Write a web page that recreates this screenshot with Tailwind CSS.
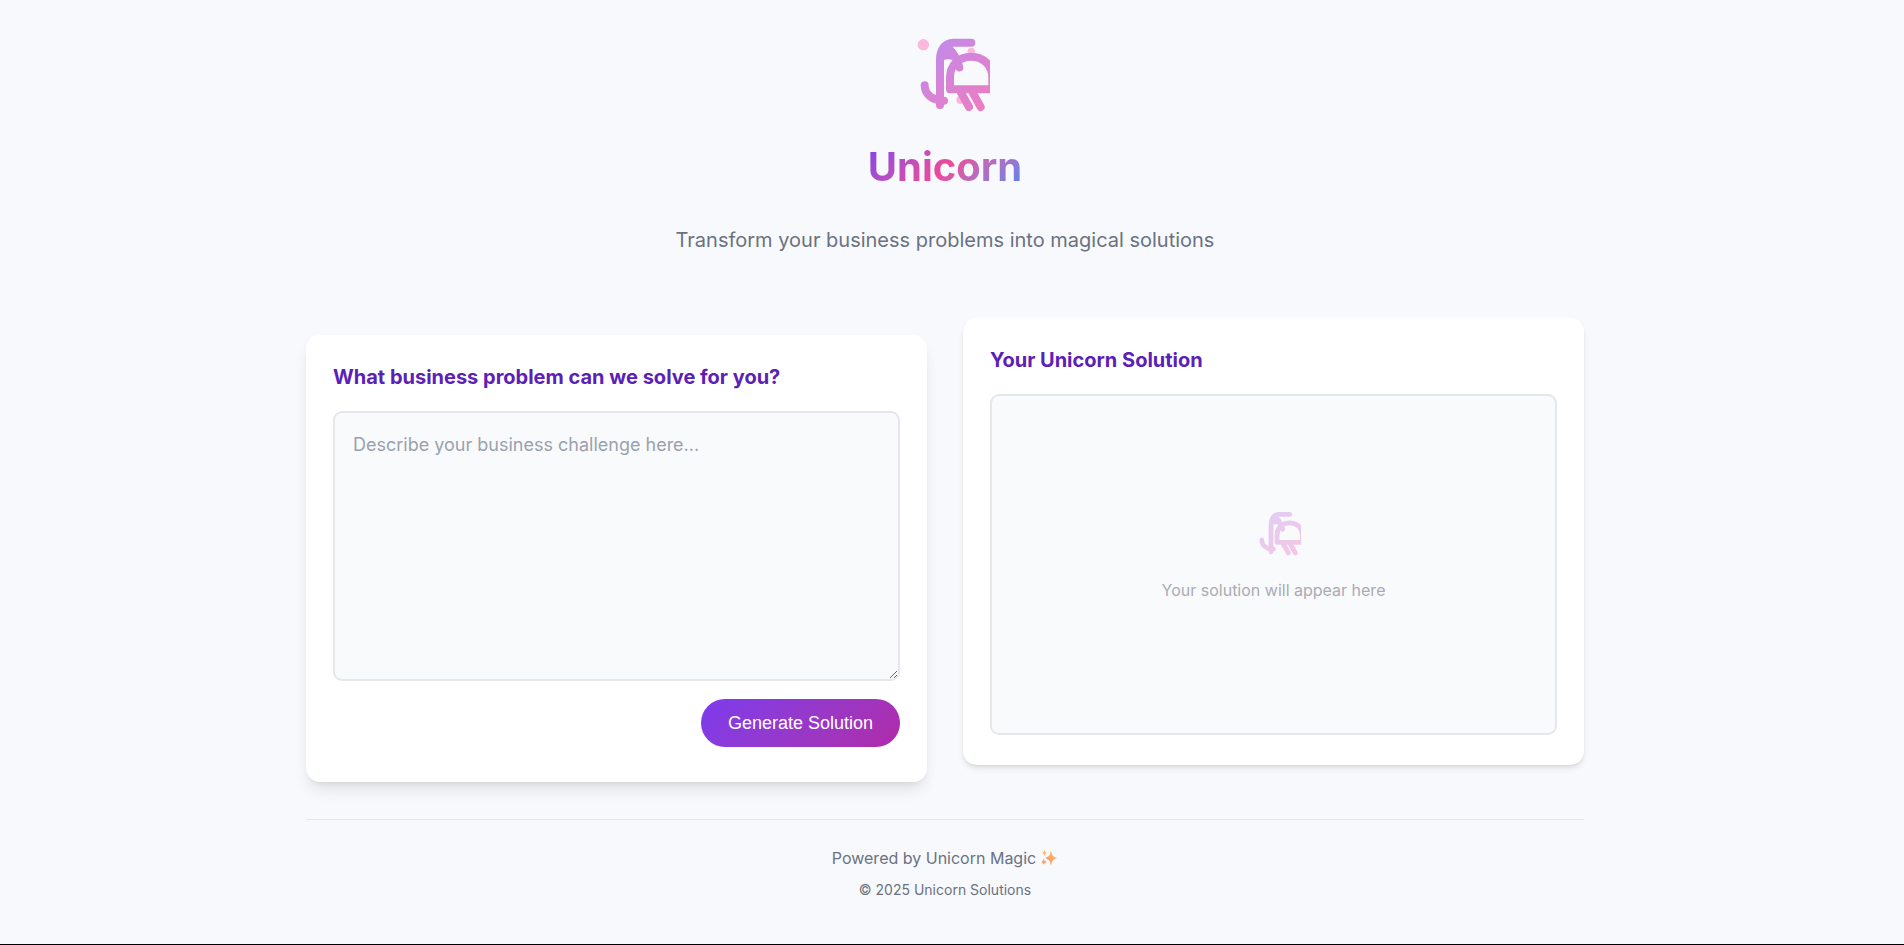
<!DOCTYPE html>
<html lang="en">
<head>
    <meta charset="UTF-8">
    <meta name="viewport" content="width=device-width, initial-scale=1.0">
    <title>Unicorn</title>
    <script src="https://cdn.jsdelivr.net/npm/@tailwindcss/browser@4"></script>
</head>
<body class="min-h-screen flex flex-col bg-[#f8f9fd] border-b border-black pr-[14px] font-['Inter',sans-serif] text-gray-500">
    <div class="w-full max-w-[1278px] mx-auto pt-[27px]">
        <header class="flex flex-col items-center text-center">
            <svg class="size-[90px]" viewBox="0 0 270 270" fill="none" aria-hidden="true">
                <defs>
                    <linearGradient id="mane" gradientUnits="userSpaceOnUse" x1="70" y1="30" x2="270" y2="270">
                        <stop offset="0" stop-color="#bb8cf0"/>
                        <stop offset="1" stop-color="#f47abc"/>
                    </linearGradient>
                </defs>
                <g fill="#f9b8dc">
                    <circle cx="70" cy="53" r="17"/>
                    <circle cx="214" cy="73" r="11"/>
                    <circle cx="181" cy="219" r="12"/>
                </g>
                <g id="unicorn" stroke="url(#mane)" stroke-width="24" stroke-linecap="round" stroke-linejoin="round">
                    <path d="M214 47H160C134 47 120 70 120 99V234"/>
                    <path d="M120 99L125 70L155 52L176 108Q152 92 131 99Z" fill="url(#mane)" stroke="none"/>
                    <path d="M148 66Q170 88 178 121"/>
                    <path d="M74 175C74 200 95 221 132 221"/>
                    <path d="M150 187V152C150 115 175 89 214 89C250 89 277 115 277 152V187Z"/>
                    <path d="M182 195L207 240M217 195L242 240"/>
                </g>
            </svg>
            <h1 class="mt-[23px] text-[40px] leading-[54px] font-bold bg-linear-135 from-[#7c3aed] via-[#ec4899] to-[#3b82f6] bg-clip-text text-transparent">Unicorn</h1>
            <p class="mt-[29px] text-xl leading-[34px]">Transform your business problems into magical solutions</p>
        </header>

        <main class="mt-[61px] grid grid-cols-2 gap-9 items-start">
            <section class="mt-[17px] min-h-[447px] p-[27px] bg-white rounded-[14px] shadow-lg">
                <label for="problem" class="block text-xl leading-[30px] font-bold text-[#5b21b6]">What business problem can we solve for you?</label>
                <textarea id="problem" placeholder="Describe your business challenge here..." class="mt-[19px] block w-full h-[270px] p-[18px] text-lg leading-7 bg-gray-50 border-2 border-gray-200 rounded-[9px] placeholder-gray-400 resize-y"></textarea>
                <div class="mt-[18px] flex justify-end">
                    <button type="button" class="h-12 px-[27px] rounded-full bg-linear-135 from-[#7c3aed] to-[#b02aa8] font-['Liberation_Sans',sans-serif] text-lg text-white">Generate Solution</button>
                </div>
            </section>

            <section class="min-h-[447px] p-[27px] bg-white rounded-[14px] shadow-md">
                <h2 class="text-xl leading-[30px] font-bold text-[#5b21b6]">Your Unicorn Solution</h2>
                <div class="mt-[19px] h-[341px] pb-[22px] flex flex-col items-center justify-center bg-gray-50 border-2 border-gray-200 rounded-[9px]">
                    <svg class="size-[54px] opacity-40" viewBox="0 0 270 270" fill="none" aria-hidden="true"><use href="#unicorn"/></svg>
                    <p class="mt-[18px] text-base leading-[26px] text-[#a9acb3]">Your solution will appear here</p>
                </div>
            </section>
        </main>

        <footer class="mt-[37px] pt-[25px] pb-10 border-t border-gray-200 text-center">
            <p class="flex items-center justify-center gap-1 text-base leading-[26px]">
                Powered by Unicorn Magic
                <svg class="size-[18px]" viewBox="0 0 18 18" role="img" aria-label="sparkles">
                    <defs>
                        <linearGradient id="spark" x1="1" y1="0" x2="0" y2="1">
                            <stop offset="0" stop-color="#ffcb55"/>
                            <stop offset="1" stop-color="#ff8672"/>
                        </linearGradient>
                    </defs>
                    <path fill="url(#spark)" d="M11 1C12 6 12 7 17 9C12 11 12 12 11 17C10 12 10 11 5 9C10 7 10 6 11 1Z"/>
                    <path fill="url(#spark)" d="M5 0C5 3 5 3 7 4C5 5 5 5 5 7C4 5 4 5 2 4C4 3 4 3 5 0ZM4 9C4 12 5 12 7 13C5 14 4 14 4 16C3 14 3 14 1 13C3 12 3 12 4 9Z"/>
                </svg>
            </p>
            <p class="mt-2 text-sm leading-[22px]">© 2025 Unicorn Solutions</p>
        </footer>
    </div>
</body>
</html>
